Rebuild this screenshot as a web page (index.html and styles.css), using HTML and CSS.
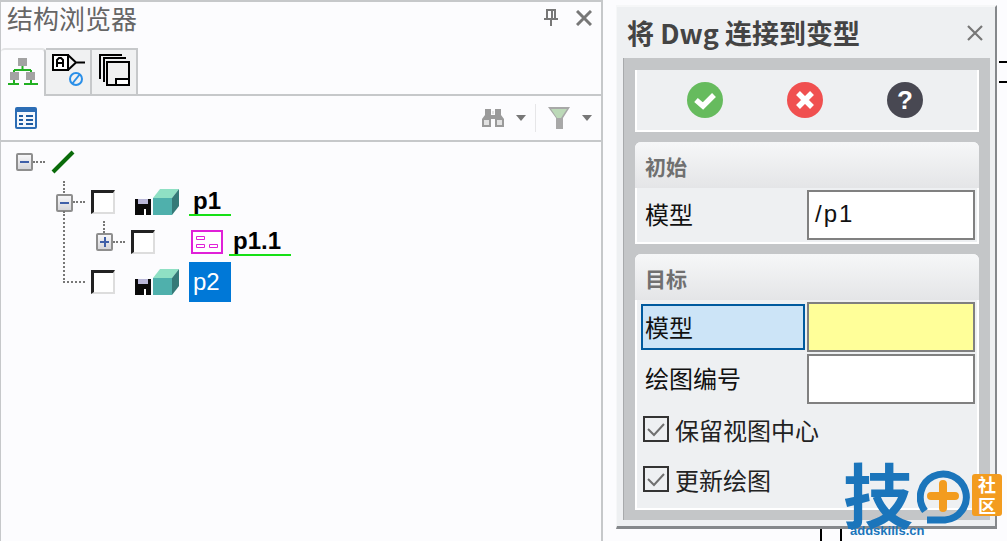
FILE: index.html
```html
<!DOCTYPE html>
<html lang="zh-CN">
<head>
  <meta charset="UTF-8">
  <title>结构浏览器</title>
  <link rel="stylesheet" href="styles.css">
</head>
<body>
  <div class="page">

    <!-- structure browser -->
    <div class="browser">
      <div class="browser-head">
        <span class="browser-title">结构浏览器</span>
        <svg class="head-icon pin" width="16" height="18" viewBox="0 0 16 18"><path d="M4 1h8v9H4zM9 1v9M1 10h14M8 10v7" fill="none" stroke="#777" stroke-width="2"/></svg>
        <svg class="head-icon" width="16" height="16" viewBox="0 0 16 16"><path d="M1 1l14 14M15 1L1 15" stroke="#777" stroke-width="3"/></svg>
      </div>

      <div class="tabs">
        <div class="tab active">
          <svg width="32" height="28" viewBox="0 0 32 28">
            <path d="M15.500 8v4M7 12h17M7 12v2M24 12v2M7 22v4M24 22v4M1 26h11M17 26h14" fill="none" stroke="#22b022" stroke-width="2"/>
            <rect x="11" y="0" width="9" height="8" fill="#a3a3a3"/>
            <rect x="3" y="14" width="9" height="8" fill="#a3a3a3"/>
            <rect x="19" y="14" width="9" height="8" fill="#a3a3a3"/>
          </svg>
        </div>
        <div class="tab">
          <svg width="34" height="34" viewBox="0 0 34 34">
            <rect x="2" y="1" width="15" height="15" fill="#fff" stroke="#000" stroke-width="2"/>
            <path d="M17 1l8 7.500-8 7.500M25 8.500h9M6 13V6l2-2h2l2 2v7M6 9h6" fill="none" stroke="#000" stroke-width="2"/>
            <circle cx="25" cy="25" r="6" fill="none" stroke="#2a8fe8" stroke-width="2"/>
            <path d="M21 30l8-10" stroke="#2a8fe8" stroke-width="2"/>
          </svg>
        </div>
        <div class="tab">
          <svg width="34" height="34" viewBox="0 0 34 34">
            <path d="M3 25V1h22M7 28V4h22" fill="none" stroke="#000" stroke-width="2"/>
            <rect x="10" y="8" width="22" height="23" fill="#f0f0f0" stroke="#000" stroke-width="2"/>
            <rect x="19" y="25" width="13" height="6" fill="#fff" stroke="#000" stroke-width="2"/>
          </svg>
        </div>
      </div>

      <div class="toolbar">
        <svg width="22" height="22" viewBox="0 0 22 22">
          <rect width="22" height="22" rx="2" fill="#2c6db5"/>
          <rect x="2" y="5" width="18" height="15" fill="#f3f7fc"/>
          <path d="M4 8h4v2H4zM4 12h4v2H4zM4 16h4v2H4zM11 8h7v2h-7zM11 12h7v2h-7zM11 16h7v2h-7z" fill="#1d5aa0"/>
        </svg>
        <div class="toolbar-right">
          <svg width="22" height="18" viewBox="0 0 22 18"><path d="M3 0h6v6h4V0h6v6l3 4v8h-9V10h-4v8H0v-8l3-4z" fill="#9a9a9a"/><path d="M2 11h5v5H2zM15 11h5v5h-5zM10 2h2v3h-2z" fill="#e2e2e2"/></svg>
          <span class="caret first-caret"></span>
          <span class="tool-sep"></span>
          <svg width="22" height="22" viewBox="0 0 22 22"><path d="M0 0h22l-7 11v11H8V11z" fill="#a8a8a8"/><path d="M3 2h16l-6 9H9z" fill="#bcd9b8"/></svg>
          <span class="caret"></span>
        </div>
      </div>

      <div class="tree">
        <div class="row">
          <span class="expander minus"></span><span class="dots"></span>
          <svg class="root-mark" width="24" height="24" viewBox="0 0 24 24"><path d="M2 22L22 2" stroke="#0a6b0a" stroke-width="4"/></svg>
        </div>

        <div class="row level-1">
          <span class="expander minus"></span><span class="dots"></span>
          <span class="check"></span>
          <svg class="model-icon" width="44" height="26" viewBox="0 0 44 26">
            <rect x="0" y="10" width="16" height="16" fill="#0a0a0a"/><rect x="3" y="10" width="10" height="5" fill="#b9b7d8"/><rect x="9" y="20" width="2" height="6" fill="#fff"/>
            <path d="M18 9l7-9h19l-7 9z" fill="#8fe0c4"/><path d="M37 9l7-9v17l-7 9z" fill="#357a78"/><rect x="18" y="9" width="19" height="17" fill="#4fb0ac"/>
          </svg>
          <span class="node-label">p1</span>
        </div>

        <div class="row level-2">
          <span class="expander plus"></span><span class="dots"></span>
          <span class="check"></span>
          <svg class="part-icon" width="32" height="24" viewBox="0 0 32 24">
            <rect x="1" y="1" width="30" height="22" fill="#fff" stroke="#e020d8" stroke-width="2"/>
            <path d="M5.500 6.500h8v3h-8zM5.500 14.500h8v3h-8zM18.500 14.500h8v3h-8z" fill="none" stroke="#e020d8"/>
          </svg>
          <span class="node-label">p1.1</span>
        </div>

        <div class="row level-1 last">
          <span class="elbow"></span>
          <span class="check"></span>
          <svg class="model-icon" width="44" height="26" viewBox="0 0 44 26">
            <rect x="0" y="10" width="16" height="16" fill="#0a0a0a"/><rect x="3" y="10" width="10" height="5" fill="#b9b7d8"/><rect x="9" y="20" width="2" height="6" fill="#fff"/>
            <path d="M18 9l7-9h19l-7 9z" fill="#8fe0c4"/><path d="M37 9l7-9v17l-7 9z" fill="#357a78"/><rect x="18" y="9" width="19" height="17" fill="#4fb0ac"/>
          </svg>
          <span class="node-label selected">p2</span>
        </div>
      </div>
    </div>

    <!-- dialog -->
    <div class="work-area">
      <span class="cad-line cad-a"></span>
      <span class="cad-line cad-b"></span>
      <span class="cad-line cad-c"></span>
      <span class="cad-line cad-d"></span>

      <div class="dialog">
        <div class="dialog-head">
          <span class="dialog-title">将 Dwg 连接到变型</span>
          <svg width="16" height="16" viewBox="0 0 16 16"><path d="M1 1l14 14M15 1L1 15" stroke="#777" stroke-width="2.200"/></svg>
        </div>

        <div class="dialog-body">
          <div class="actions">
            <svg width="36" height="36" viewBox="0 0 36 36"><circle cx="18" cy="18" r="18" fill="#66bb5e"/><path d="M9 18l7 6 11-11" fill="none" stroke="#fff" stroke-width="5.500"/></svg>
            <svg width="36" height="36" viewBox="0 0 36 36"><circle cx="18" cy="18" r="18" fill="#f05050"/><path d="M11 11l14 14M25 11L11 25" stroke="#fff" stroke-width="5.500"/></svg>
            <svg width="36" height="36" viewBox="0 0 36 36"><circle cx="18" cy="18" r="18" fill="#484852"/><text class="help-mark" x="18" y="27" text-anchor="middle">?</text></svg>
          </div>

          <div class="group">
            <div class="group-head">初始</div>
            <div class="fields">
              <div class="field-label">模型</div>
              <div class="field">/p1</div>
            </div>
          </div>

          <div class="group target">
            <div class="group-head">目标</div>
            <div class="fields">
              <div class="field-label focused">模型</div>
              <div class="field required"></div>
              <div class="field-label">绘图编号</div>
              <div class="field"></div>
            </div>
            <div class="option"><span class="tick"><svg width="22" height="22" viewBox="0 0 22 22"><path d="M3 11l6 6 10-11" fill="none" stroke="#707070" stroke-width="2"/></svg></span>保留视图中心</div>
            <div class="option"><span class="tick"><svg width="22" height="22" viewBox="0 0 22 22"><path d="M3 11l6 6 10-11" fill="none" stroke="#707070" stroke-width="2"/></svg></span>更新绘图</div>
          </div>
        </div>
      </div>

      <!-- watermark -->
      <div class="watermark">
        <span class="mark-char">技</span>
        <svg class="mark-ring" width="60" height="60" viewBox="0 0 60 60">
          <path d="M8 44A23 23 0 1 1 28 53H10" fill="none" stroke="#1b75bb" stroke-width="7"/>
          <path d="M26 17v24M14 29h24" stroke="#f39c1f" stroke-width="8" stroke-linecap="round"/>
        </svg>
        <span class="mark-badge">社<br>区</span>
        <span class="mark-url">addskills.cn</span>
      </div>
    </div>

  </div>
</body>
</html>
```

FILE: styles.css
```css
* { box-sizing: border-box; }
html, body { margin: 0; height: 100%; overflow: hidden; }
body { font-family: "Noto Sans CJK SC", "Liberation Sans", sans-serif; background: #fcfcfe; color: #111; }
.page { display: flex; width: 1007px; height: 541px; }

/* structure browser */
.browser {
  width: 603px; height: 541px; flex: none; background: #fcfcfe;
  border: solid #c6c8ca; border-width: 2px 2px 0 1px;
}
.browser-head { display: flex; align-items: center; height: 46px; padding: 0 9px 14px 6px; }
.browser-title { font-size: 26px; line-height: 30px; color: #666; flex: 1; }
.head-icon { display: block; }
.head-icon.pin { margin-right: 17px; }

.tabs { display: flex; height: 48px; border-bottom: 2px solid #c6c8ca; }
.tab {
  width: 46px; height: 46px; background: #f0f1f2; display: flex; align-items: flex-start; justify-content: center;
  padding-top: 4px; border: solid #c6c8ca; border-width: 2px 2px 0 0;
}
.tab.active {
  width: 45px; height: 48px; background: #fcfcfe; padding-top: 8px;
  border-radius: 4px 4px 0 0; border-width: 2px 2px 0 0; border-color: #e4e5e6 #c6c8ca;
}

.toolbar {
  display: flex; align-items: center; height: 46px; padding: 0 9px 0 14px;
  border-bottom: 2px solid #c6c8ca;
}
.toolbar-right { display: flex; align-items: center; margin-left: auto; }
.caret { width: 0; height: 0; margin-left: 12px; border: 5px solid transparent; border-top: 6px solid #777; border-bottom: 0; }
.first-caret { margin-right: 9px; }
.tool-sep { width: 1px; height: 28px; background: #e6e6e8; margin-right: 12px; }

/* tree */
.row { display: flex; align-items: center; height: 40px; padding-left: 15px; }
.row.level-1 { padding-left: 55px; }
.row.level-2 { padding-left: 95px; }
.expander {
  position: relative; flex: none; width: 17px; height: 18px; border: 2px solid #8e8e8e; border-radius: 2px;
  background: linear-gradient(#f6f6f8, #d6d6da);
}
.expander::before { content: ""; position: absolute; left: 2px; top: 6px; width: 9px; height: 2px; background: #3f5fa8; }
.expander.plus::after { content: ""; position: absolute; left: 5.500px; top: 2px; width: 2px; height: 10px; background: #3f5fa8; }
.row.level-1 .expander { margin-top: 1px; }
.dots { position: relative; flex: none; width: 12px; border-top: 2px dotted #777; margin-right: 6px; }
.check { flex: none; width: 24px; height: 24px; border: solid; border-width: 3px 2px 2px 3px; border-color: #222 #ddd #ddd #222; background: #fff; }

/* stub going up from an expander to its parent */
.row.level-1 .dots::before, .row.level-2 .dots::before {
  content: ""; position: absolute; border-left: 2px dotted #777; left: -10px; top: -22px; height: 12px;
}
.elbow {
  flex: none; width: 22px; height: 72px; margin: -72px 6px 0 7px;
  border: dotted #777; border-width: 0 0 2px 2px; transform: translateY(1px);
}

.model-icon { margin-left: 20px; margin-right: 10px; }
.part-icon { margin-left: 36px; margin-right: 6px; }
.node-label {
  height: 28px; padding: 0 10px 0 4px; font-family: "Liberation Sans", sans-serif; font-size: 24px; font-weight: bold;
  line-height: 26px; color: #000; border-bottom: 2px solid #16e016;
}
.node-label.selected {
  height: 40px; padding-right: 11px; line-height: 40px; font-weight: normal; color: #fff; background: #0078d7; border: 0;
}

/* dialog side */
.work-area { position: relative; flex: 1; padding: 5px 9px 0 13px; }
.cad-line { position: absolute; background: #000; }
.cad-a { left: 396px; top: 61px; width: 10px; height: 2px; }
.cad-b { left: 396px; top: 81px; width: 10px; height: 2px; }
.cad-c { left: 217px; top: 529px; width: 2px; height: 12px; }
.cad-d { left: 237px; top: 529px; width: 2px; height: 12px; }

.dialog {
  width: 381px; height: 524px; padding: 0 5px 6px 6px; background: #eef0f2;
  border: solid; border-width: 2px 2px 3px 1px; border-color: #f6f7f8 #85888b #85888b #f6f7f8;
}
.dialog-head { display: flex; align-items: center; justify-content: space-between; height: 51px; padding: 0 7px 0 4px; }
.dialog-title { font-size: 27px; font-weight: bold; line-height: 30px; color: #444; }
.dialog-body {
  height: 462px; display: flex; flex-direction: column; gap: 10px; padding: 12px 11px 10px;
  background: #c4c6c8; border: solid #a8aaac; border-width: 0 0 0 1px;
}

.actions {
  flex: none; height: 62px; display: flex; justify-content: center; align-items: center; gap: 64px; padding-right: 4px;
  background: #eef0f2; border: solid #fff; border-width: 0 2px 2px;
}
.help-mark { font-family: "Liberation Sans", sans-serif; font-size: 26px; font-weight: bold; fill: #fff; }

.group { background: #eef0f2; border: solid #fff; border-width: 0 2px 2px; border-radius: 6px 6px 0 0; }
.group.target { flex: 1; }
.group.target .fields { padding-bottom: 0; }
.group-head {
  height: 46px; margin: 0 -2px; padding: 0 0 0 10px; font-size: 21px; font-weight: bold; line-height: 48px; color: #707070;
  background: linear-gradient(#f6f7f8, #e4e5e7); border-radius: 6px 6px 0 0;
}
.fields { display: grid; grid-template-columns: 170px 168px; row-gap: 2px; padding: 2px 0; }
.field-label { font-size: 24px; line-height: 48px; padding-left: 8px; height: 50px; }
.field-label.focused {
  height: 46px; line-height: 42px; margin: 2px 2px 2px 4px; padding-left: 2px;
  background: #cce4f7; border: 2px solid #005a9e;
}
.field {
  height: 50px; padding-left: 6px; background: #fff; border: 2px solid #808080;
  font-family: "Liberation Sans", sans-serif; font-size: 24px; line-height: 44px; letter-spacing: 2px;
}
.field.required { background: #ffff99; }
.option { display: flex; align-items: center; gap: 6px; height: 50px; padding-left: 6px; font-size: 24px; color: #222; }
.tick { flex: none; width: 26px; height: 26px; border: 2px solid #333; }
.tick svg { display: block; }

/* watermark lies over the dialog */
.watermark { position: absolute; left: 240px; top: 462px; width: 165px; height: 79px; }
.mark-char { position: absolute; left: 0; top: 2px; font-size: 70px; font-weight: bold; line-height: 58px; color: #1b75bb; }
.mark-ring { position: absolute; left: 74px; top: 5px; }
.mark-badge {
  position: absolute; left: 129px; top: 12px; width: 30px; height: 42px; background: #f39c1f; border-radius: 3px;
  font-size: 18px; font-weight: bold; line-height: 21px; color: #fff; text-align: center;
}
.mark-url {
  position: absolute; left: 7px; top: 62px; font-family: "Liberation Sans", sans-serif; font-size: 13px; font-weight: bold;
  line-height: 14px; color: #1b75bb;
}
```
